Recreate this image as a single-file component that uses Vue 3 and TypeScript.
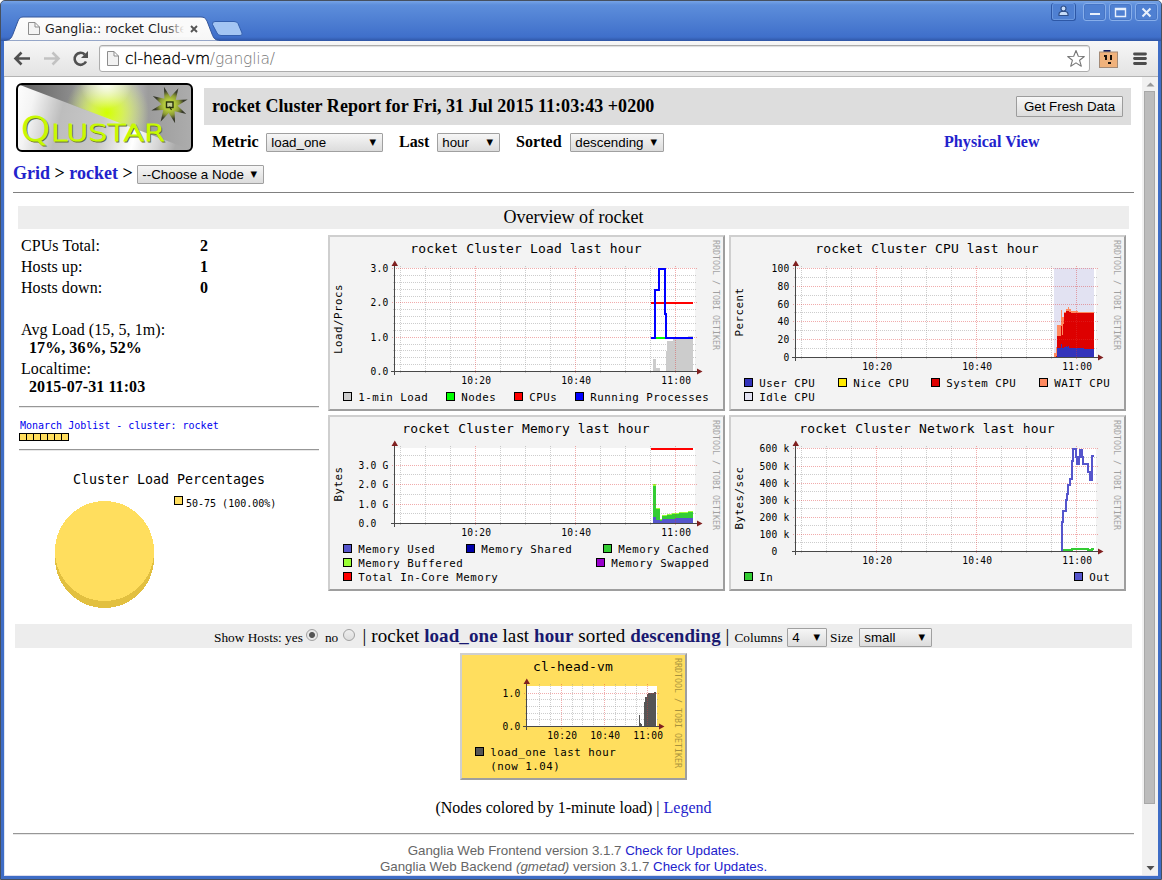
<script setup lang="ts">
interface Tick { y: number; label: string; x?: number }
interface Swatch { x: number; y: number; color: string; label: string; extra?: string }
interface Shape { d: string; color: string; line?: boolean }
interface Graph {
  id: string
  title: string
  unit?: string
  unitY?: number
  width: number
  height: number
  titleY: number
  plotRight: number
  base: number
  ticks: Tick[]
  minorY: number[]
  majorX: number[]
  minorX: number[]
  shapes: Shape[]
  legend: Swatch[]
}

type Step = [number, number]

// Builds a stepped area: every entry is [start x, top y], closed at `end`.
function steps(base: number, end: number, list: Step[]): string {
  let d = `M${list[0][0]} ${base}`
  for (const [x, y] of list) d += `H${x}V${y}`
  return `${d}H${end}V${base}Z`
}

const hourMajor = [147.5, 247.5, 347.5]
const hourMinor = [72.5, 97.5, 122.5, 172.5, 197.5, 222.5, 272.5, 297.5, 322.5]
const times = ['10:20', '10:40', '11:00']
const wide = { width: 397, height: 176, plotRight: 367, majorX: hourMajor, minorX: hourMinor }

const graphs: Graph[] = [
  {
    ...wide, id: 'load', title: 'rocket Cluster Load last hour', titleY: 17.5, unit: 'Load/Procs', unitY: 84, base: 136,
    ticks: [{ y: 33.5, label: '3.0' }, { y: 67.5, label: '2.0' }, { y: 102.5, label: '1.0' }, { y: 136.5, label: '0.0' }],
    minorY: [40.5, 47.5, 54.5, 61.5, 74.5, 81.5, 88.5, 95.5, 109.5, 115.5, 122.5, 129.5],
    shapes: [
      { color: '#cccccc', d: steps(136, 332, [[325, 124], [328, 133]]) },
      { color: '#cccccc', d: steps(136, 365, [[338, 116], [339, 106], [345, 103], [360, 101]]) },
      { color: '#00ff00', line: true, d: 'M323 103H365' },
      { color: '#ff0000', line: true, d: 'M323 68H365' },
      { color: '#0000ff', line: true, d: 'M323 103H327V55H331V34H337V79H338V103H365' },
    ],
    legend: [
      { x: 15, y: 157, color: '#cccccc', label: '1-min Load' },
      { x: 118, y: 157, color: '#00ff00', label: 'Nodes' },
      { x: 186, y: 157, color: '#ff0000', label: 'CPUs' },
      { x: 247, y: 157, color: '#0000ff', label: 'Running Processes' },
    ],
  },
  {
    ...wide, id: 'cpu', title: 'rocket Cluster CPU last hour', titleY: 17.5, unit: 'Percent', unitY: 77, base: 122,
    ticks: [{ y: 33.5, label: '100' }, { y: 51.5, label: '80' }, { y: 69.5, label: '60' }, { y: 86.5, label: '40' }, { y: 104.5, label: '20' }, { y: 122.5, label: '0' }],
    minorY: [42.5, 60.5, 77.5, 95.5, 113.5],
    shapes: [
      { color: '#e2e2f2', d: 'M325 33H365V122H325Z' },
      { color: '#ff8a60', d: steps(122, 365, [[325, 118], [327, 112], [328, 90], [332, 75], [333, 82], [335, 77], [337, 74], [339, 72], [340, 74], [342, 76], [349, 77]]) },
      { color: '#dd0000', d: steps(122, 365, [[327, 121], [328, 101], [332, 91], [333, 100], [334, 89], [335, 78], [337, 76], [340, 77], [342, 78]]) },
      { color: '#3333bb', d: steps(122, 365, [[328, 113], [332, 109], [333, 113], [335, 112], [337, 111], [338, 112], [339, 111], [340, 113], [355, 114]]) },
    ],
    legend: [
      { x: 15, y: 143, color: '#3333bb', label: 'User CPU' },
      { x: 109, y: 143, color: '#ffea00', label: 'Nice CPU' },
      { x: 202, y: 143, color: '#dd0000', label: 'System CPU' },
      { x: 310, y: 143, color: '#ff8a60', label: 'WAIT CPU' },
      { x: 15, y: 157, color: '#e2e2f2', label: 'Idle CPU' },
    ],
  },
  {
    ...wide, id: 'memory', title: 'rocket Cluster Memory last hour', titleY: 17.5, unit: 'Bytes', unitY: 69, base: 108,
    ticks: [{ y: 50.5, label: '3.0 G' }, { y: 69.5, label: '2.0 G' }, { y: 89.5, label: '1.0 G' }, { y: 108.5, label: '0.0', x: 48.5 }],
    minorY: [40.5, 59.5, 79.5, 98.5],
    shapes: [
      { color: '#99ff33', d: steps(108, 365, [[325, 69], [328, 93], [332, 104], [334, 100], [339, 99], [344, 98], [351, 97], [360, 96]]) },
      { color: '#33cc33', d: steps(108, 365, [[325, 71], [328, 94], [332, 105], [334, 101], [339, 100], [344, 99], [351, 98], [360, 97]]) },
      { color: '#5555cc', d: steps(108, 365, [[325, 102], [328, 105], [332, 106], [334, 104], [347, 103]]) },
      { color: '#ff0000', line: true, d: 'M323 34H365' },
    ],
    legend: [
      { x: 15, y: 129, color: '#5555cc', label: 'Memory Used' },
      { x: 138, y: 129, color: '#0000aa', label: 'Memory Shared' },
      { x: 275, y: 129, color: '#33cc33', label: 'Memory Cached' },
      { x: 15, y: 143, color: '#99ff33', label: 'Memory Buffered' },
      { x: 268, y: 143, color: '#9900cc', label: 'Memory Swapped' },
      { x: 15, y: 157, color: '#ff0000', label: 'Total In-Core Memory' },
    ],
  },
  {
    ...wide, id: 'network', title: 'rocket Cluster Network last hour', titleY: 17.5, unit: 'Bytes/sec', unitY: 83, base: 136,
    ticks: [
      { y: 33.5, label: '600 k' }, { y: 51.5, label: '500 k' }, { y: 68.5, label: '400 k' }, { y: 85.5, label: '300 k' },
      { y: 102.5, label: '200 k' }, { y: 119.5, label: '100 k' }, { y: 136.5, label: '0', x: 48.5 },
    ],
    minorY: [42.5, 59.5, 76.5, 93.5, 110.5, 127.5],
    shapes: [
      { color: '#33cc33', line: true, d: 'M333 135H343V134H359V135H363V134H365' },
      { color: '#5555cc', line: true, d: 'M333 136V107H334V96H337V85H338V79H339V70H341V64H343V46H344V34H347V42H348V49H350V42H351V35H353V42H354V49H359V57H361V65H363V41H365' },
    ],
    legend: [
      { x: 15, y: 157, color: '#33cc33', label: 'In' },
      { x: 345, y: 157, color: '#5555cc', label: 'Out' },
    ],
  },
]

const nodeGraph: Graph = {
  id: 'node', title: 'cl-head-vm', titleY: 18, width: 227, height: 127, plotRight: 197, base: 73,
  ticks: [{ y: 40.5, label: '1.0' }, { y: 73.5, label: '0.0' }],
  minorY: [46.5, 53.5, 60.5, 66.5],
  majorX: [101.5, 144.5, 187.5],
  minorX: [79.5, 90.5, 112.5, 122.5, 133.5, 155.5, 165.5, 176.5],
  shapes: [
    { color: '#555555', d: steps(73, 182, [[179, 62], [180, 70], [181, 71]]) },
    { color: '#555555', d: steps(73, 196, [[184, 49], [185, 44], [187, 41], [188, 40], [194, 39]]) },
  ],
  legend: [{ x: 15, y: 94, color: '#555555', label: 'load_one last hour', extra: '(now 1.04)' }],
}

const starPoints = Array.from({ length: 16 }, (_, i) => {
  const r = i % 2 === 0 ? 19 : 8
  const a = ((i * 22.5 - 107) * Math.PI) / 180
  return `${(153.5 + r * Math.cos(a)).toFixed(1)},${(22 + r * Math.sin(a)).toFixed(1)}`
}).join(' ')

const groups = [
  { cls: 'clusters', items: graphs },
  { cls: 'nodes', items: [nodeGraph] },
]
</script>

<template>
  <div class="window">
    <div class="titlebar">
      <svg class="tabs" width="250" height="27" viewBox="0 0 250 27">
        <defs>
          <linearGradient id="tabfill" x2="0" y2="1"><stop offset="0" stop-color="#fdfdfd" /><stop offset="1" stop-color="#f6f6f6" /></linearGradient>
          <linearGradient id="fade" x2="1" y2="0"><stop offset="0" stop-color="#fafafa" stop-opacity="0" /><stop offset="1" stop-color="#fafafa" /></linearGradient>
        </defs>
        <path d="M0 26.5C6 26 7 25 9 20L14 7C15.500 3.500 17 3 20 3H197C200 3 201.500 4 203 7L208 20C210 25 211 26 216 26.500V27H0Z" fill="url(#tabfill)" stroke="#34569a" stroke-width="1" />
        <path d="M208.500 10.500Q208 7.500 211 7.500H230Q233 7.500 234 9.500L238 19Q239 21.500 236 21.500H217Q214 21.500 213 19Z" fill="#a3c5f3" stroke="#335fae" />
        <path d="M24.500 8.500H31L35.500 13V20.500H24.500ZM31 8.500V13H35.500" fill="#f4f4f4" stroke="#8d8d8d" />
        <text x="41" y="19" class="tabtext">Ganglia:: rocket Cluste</text>
        <rect x="162" y="5" width="18" height="18" fill="url(#fade)" />
        <rect x="180" y="5" width="16" height="18" fill="#fafafa" />
        <path d="M187 12L193 18M193 12L187 18" stroke="#555" stroke-width="1.900" />
      </svg>
      <div class="winbuttons">
        <span class="wb user"><svg width="23" height="16" viewBox="0 0 23 16"><circle cx="11.500" cy="5.500" r="2.500" /><path d="M7 12.500V11Q7 9 9.500 8.500H13.500Q16 9 16 11V12.500Z" /></svg></span>
        <span class="wb"><svg width="21" height="16" viewBox="0 0 21 16"><path d="M6 10H16" class="bold" /></svg></span>
        <span class="wb"><svg width="21" height="16" viewBox="0 0 21 16"><path d="M5.500 4.500H15.500V12.500H5.500ZM5.500 5.500H15.500" /></svg></span>
        <span class="wb"><svg width="21" height="16" viewBox="0 0 21 16"><path d="M6.500 4.500L14.500 12.500M14.500 4.500L6.500 12.500" class="bold" /></svg></span>
      </div>
    </div>

    <div class="toolbar">
      <svg width="66" height="35" viewBox="0 0 66 35">
        <path d="M26 17.500H12.500M17.500 11.500L11.500 17.500L17.500 23.500" fill="none" stroke="#505050" stroke-width="2.600" />
        <path d="M40 17.500H53.500M48.500 11.500L54.500 17.500L48.500 23.500" fill="none" stroke="#c2c2c2" stroke-width="2.600" />
      </svg>
      <svg class="reload" width="19" height="35" viewBox="0 0 19 35">
        <path d="M16 20.500A6 6 0 1 1 14.800 13.500" fill="none" stroke="#505050" stroke-width="2.600" />
        <path d="M18 10V17H11Z" fill="#505050" />
      </svg>
      <div class="urlbar">
        <svg width="18" height="20" viewBox="0 0 18 20"><path d="M3.500 2.500H10L14.500 7V16.500H3.500ZM10 2.500V7H14.500" fill="#f2f2f2" stroke="#8d8d8d" /></svg>
        <svg class="url" width="160" height="24" viewBox="0 0 160 24"><text x="0" y="17" textLength="150" lengthAdjust="spacing"><tspan class="host">cl-head-vm</tspan><tspan fill="#777">/ganglia/</tspan></text></svg>
        <svg class="bookmark" width="20" height="20" viewBox="0 0 20 20"><path d="M10 1.500L12.300 7.200L18.300 7.500L13.600 11.300L15.300 17.200L10 13.900L4.700 17.200L6.400 11.300L1.700 7.500L7.700 7.200Z" fill="#fff" stroke="#777" stroke-width="1.100" stroke-linejoin="round" /></svg>
      </div>
      <svg class="ext" width="20" height="20" viewBox="0 0 20 20">
        <rect x="4.500" y="1" width="7" height="3" fill="#111c5c" /><rect x="0.500" y="3" width="18" height="15.500" fill="#f0b27c" stroke="#a38a76" />
        <path d="M5 6H8V11H6V8H5ZM11 6H13V11H11ZM9 13H12V15H9Z" fill="#1a120c" />
      </svg>
      <svg class="menu" width="14" height="14" viewBox="0 0 14 14"><path d="M1.500 2H12.500M1.500 6.500H12.500M1.500 11.500H12.500" stroke="#4c4c4c" stroke-width="2.800" stroke-linecap="round" /></svg>
    </div>

    <div class="viewport">
      <main class="page">
        <header class="header">
          <svg class="logo" width="177" height="69" viewBox="0 0 177 69">
            <defs>
              <linearGradient id="silver" gradientUnits="userSpaceOnUse" x1="0" y1="0" x2="165" y2="40">
                <stop offset="0" stop-color="#fff" /><stop offset="0.120" stop-color="#f4f4f4" /><stop offset="0.300" stop-color="#bdbdbd" />
                <stop offset="0.550" stop-color="#c8c8c8" /><stop offset="0.750" stop-color="#fff" /><stop offset="0.900" stop-color="#d4d4d4" /><stop offset="1" stop-color="#aaa" />
              </linearGradient>
              <linearGradient id="steel" x1="0" y1="0" x2="1" y2="0">
                <stop offset="0.050" stop-color="#666" /><stop offset="0.300" stop-color="#8c8c8c" /><stop offset="0.520" stop-color="#e4e4e4" />
                <stop offset="0.750" stop-color="#9c9c9c" /><stop offset="1" stop-color="#acacac" />
              </linearGradient>
              <radialGradient id="glow" gradientUnits="userSpaceOnUse" cx="91" cy="30" r="42">
                <stop offset="0" stop-color="#d2ff00" /><stop offset="0.350" stop-color="#d8f83c" stop-opacity="0.850" /><stop offset="1" stop-color="#d8f080" stop-opacity="0" />
              </radialGradient>
              <radialGradient id="starfill"><stop offset="0.300" stop-color="#b4cb3c" /><stop offset="0.550" stop-color="#8d9c35" /><stop offset="0.800" stop-color="#383a2c" /></radialGradient>
              <radialGradient id="shine" gradientUnits="userSpaceOnUse" cx="90" cy="0" r="26"><stop offset="0" stop-color="#fff" stop-opacity="0.900" /><stop offset="1" stop-color="#fff" stop-opacity="0" /></radialGradient>
            </defs>
            <rect x="1" y="1" width="175" height="67" rx="5" fill="url(#silver)" />
            <path d="M4 2H172Q175 2 175 5V67L4 2Z" fill="url(#steel)" />
            <path d="M4 2H175V67Z" fill="url(#glow)" />
            <path d="M4 2H175V67Z" fill="url(#shine)" />
            <polygon :points="starPoints" fill="url(#starfill)" />
            <rect x="150.500" y="19" width="6.500" height="5.500" fill="#c4cf8c" stroke="#26300c" stroke-width="1.400" /><path d="M153.500 23.500L155.500 27" stroke="#26300c" stroke-width="1.200" />
            <g class="wordshadow" transform="translate(1 1)"><text x="4.500" y="57.500" class="big" textLength="30" lengthAdjust="spacingAndGlyphs">Q</text><text x="35" y="57.500" class="rest" textLength="114" lengthAdjust="spacingAndGlyphs">LUSTAR</text></g>
            <g class="word"><text x="4.500" y="57.500" class="big" textLength="30" lengthAdjust="spacingAndGlyphs">Q</text><text x="35" y="57.500" class="rest" textLength="114" lengthAdjust="spacingAndGlyphs">LUSTAR</text></g>
            <rect x="1" y="1" width="175" height="67" rx="5" fill="none" stroke="#000" stroke-width="2" />
          </svg>
          <div class="report">
            <div class="reportbar">
              <h1>rocket Cluster Report for Fri, 31 Jul 2015 11:03:43 +0200</h1>
              <button type="button" class="fresh">Get Fresh Data</button>
            </div>
            <div class="controls">
              <b class="metric">Metric</b><span class="select s1">load_one<i>▼</i></span>
              <b class="last">Last</b><span class="select s2">hour<i>▼</i></span>
              <b class="sorted">Sorted</b><span class="select s3">descending<i>▼</i></span>
              <a class="physical">Physical View</a>
            </div>
          </div>
        </header>
        <nav class="crumbs"><b><a>Grid</a> &gt; <a>rocket</a> &gt;</b><span class="select s4">--Choose a Node<i>▼</i></span></nav>
        <div class="rule"></div>
        <h2 class="overview">Overview of rocket</h2>

        <section class="dashboard">
          <aside class="stats">
            <dl>
              <div><dt>CPUs Total:</dt><dd>2</dd></div>
              <div><dt>Hosts up:</dt><dd>1</dd></div>
              <div><dt>Hosts down:</dt><dd>0</dd></div>
            </dl>
            <p class="avg">Avg Load (15, 5, 1m):<b>17%, 36%, 52%</b></p>
            <p>Localtime:<b>2015-07-31 11:03</b></p>
            <div class="groove"></div>
            <div class="joblist">Monarch Joblist - cluster: rocket</div>
            <div class="jobs"><span v-for="n in 7" :key="n"></span></div>
            <div class="groove second"></div>
            <svg class="pie" width="300" height="150" viewBox="0 0 300 150">
              <text x="54" y="24" class="pietitle">Cluster Load Percentages</text>
              <path d="M36 91V98A49.500 50 0 0 0 135 98V91Z" fill="#e2c040" shape-rendering="crispEdges" />
              <ellipse cx="85.500" cy="91" rx="49.500" ry="50" fill="#ffde5e" shape-rendering="crispEdges" />
              <rect x="155.500" y="36.500" width="8" height="8" fill="#ffde5e" stroke="#000" />
              <text x="167" y="47" class="pielegend">50-75 (100.00%)</text>
            </svg>
          </aside>
          <div class="clusters">
            <div v-for="g in groups[0].items.slice(0, 0)" :key="g.id"></div>
          </div>
        </section>

        <template v-for="group in groups" :key="group.cls">
          <div v-if="group.cls === 'nodes'" class="hostbar">
            <span class="small">Show Hosts: yes</span><span class="radio on"></span><span class="small no">no</span><span class="radio off"></span>
            <span class="summary">| rocket <b>load_one</b> last <b>hour</b> sorted <b>descending</b> |</span>
            <span class="small cols">Columns</span><span class="select s5">4<i>▼</i></span>
            <span class="small size">Size</span><span class="select s6">small<i>▼</i></span>
          </div>
          <div :class="group.cls">
            <div v-for="g in group.items" :key="g.id" class="graph" :class="g.id">
              <svg :width="g.width" :height="g.height" :viewBox="`0 0 ${g.width} ${g.height}`">
                <rect x="67" y="33" :width="g.plotRight - 67" :height="g.base - 33" fill="#fff" />
                <g class="minor">
                  <path v-for="y in g.minorY" :key="y" :d="`M65 ${y}H${g.plotRight + 2}`" />
                  <path v-for="x in g.minorX" :key="x" :d="`M${x} 31V${g.base + 2}`" />
                </g>
                <path v-for="(s, i) in g.shapes.filter((q) => !q.line)" :key="'s' + i" :d="s.d" :fill="s.color" shape-rendering="crispEdges" />
                <g class="major">
                  <path v-for="t in g.ticks" :key="t.y" :d="`M64 ${t.y}H${g.plotRight + 2}`" />
                  <path v-for="x in g.majorX" :key="x" :d="`M${x} 31V${g.base + 3}`" />
                </g>
                <path v-for="(s, i) in g.shapes.filter((q) => q.line)" :key="'n' + i" :d="s.d" fill="none" :stroke="s.color" stroke-width="2" shape-rendering="crispEdges" />
                <path class="axis" :d="`M66.500 29V${g.base + 4}M63 ${g.base + 0.5}H${g.plotRight + 4}`" />
                <path class="arrow" :d="`M63.500 31H70L66.800 25.500ZM${g.plotRight + 2} ${g.base - 2.500}V${g.base + 3.500}L${g.plotRight + 7.500} ${g.base + 0.5}Z`" />
                <text v-for="t in g.ticks" :key="'l' + t.y" class="tick" text-anchor="end" :x="t.x ?? 60.500" :y="t.y + 3.500">{{ t.label }}</text>
                <text v-for="(x, i) in g.majorX" :key="'t' + x" class="tick" text-anchor="middle" :x="x + 0.800" :y="g.base + 12.500">{{ times[i] }}</text>
                <text class="gtitle" text-anchor="middle" :x="g.width / 2 - 0.500" :y="g.titleY">{{ g.title }}</text>
                <text v-if="g.unit" class="gtext" text-anchor="middle" :transform="`translate(14 ${g.unitY}) rotate(-90)`">{{ g.unit }}</text>
                <text class="mark" :transform="`translate(${g.width - 12.500} 5) rotate(90)`">RRDTOOL / TOBI OETIKER</text>
                <g v-for="l in g.legend" :key="l.label">
                  <rect :x="l.x + 0.5" :y="l.y + 0.5" width="8" height="8" :fill="l.color" stroke="#000" />
                  <text class="gtext" :x="l.x + 15.200" :y="l.y + 9">{{ l.label }}</text>
                  <text v-if="l.extra" class="gtext" :x="l.x + 15.200" :y="l.y + 23">{{ l.extra }}</text>
                </g>
              </svg>
            </div>
          </div>
        </template>

        <p class="colored">(Nodes colored by 1-minute load) | <a>Legend</a></p>
        <div class="groove wide"></div>
        <footer class="footer">
          <div>Ganglia Web Frontend version 3.1.7 <a>Check for Updates.</a></div>
          <div>Ganglia Web Backend <em>(gmetad)</em> version 3.1.7 <a>Check for Updates.</a></div>
        </footer>
      </main>
      <div class="scroll">
        <svg width="15" height="14" viewBox="0 0 15 14"><path d="M3.500 9.500L7.500 5.500L11.500 9.500Z" fill="#999" /></svg>
        <div class="thumb"></div>
        <svg class="down" width="15" height="14" viewBox="0 0 15 14"><path d="M3.500 5L7.500 9.500L11.500 5Z" fill="#505050" /></svg>
      </div>
    </div>
  </div>
</template>

<style>
body { margin: 0; background: #fff; }
</style>

<style scoped>
* { box-sizing: border-box; }
svg { display: block; flex: none; }
.window { width: 1162px; height: 880px; overflow: hidden; border: 1px solid #46505f; border-radius: 5px 5px 0 0; background: #3e6dc6; display: flex; flex-direction: column; }
.titlebar { height: 40px; flex: none; background: linear-gradient(#76a3e6 0, #5d8edb 4px, #3f6fca 36px, #2f55a5 40px); display: flex; justify-content: space-between; padding: 13px 3px 0; }
.tabtext { font: 12.5px "DejaVu Sans", sans-serif; fill: #222; }
.winbuttons { display: flex; gap: 3px; margin-top: -11px; height: 17px; }
.wb { width: 23px; height: 18px; border: 1px solid #87aeea; border-radius: 3px; box-shadow: inset 0 0 0 1px #4776c7; display: flex; justify-content: center; background: #4f80d2; }
.wb.user { width: 25px; border-color: #2d57a6; box-shadow: inset 0 0 0 1px #6a98df; margin-right: 4px; border-top: 0; }
.wb path { fill: none; stroke: #e8f0fc; stroke-width: 1.4; }
.wb .bold { stroke-width: 2; }
.wb.user path, .wb.user circle { fill: #c7dcf8; stroke: #2f4f89; stroke-width: 1.2; }
.toolbar { height: 36px; flex: none; margin: 0 3px; background: linear-gradient(#f7f7f7, #e3e3e3); border-bottom: 1px solid #b4b4b4; display: flex; align-items: center; }
.urlbar { margin-left: 10px; width: 991px; height: 27px; border: 1px solid #acacac; border-radius: 3px; background: #fff; display: flex; align-items: center; padding: 0 3px 0 4px; box-shadow: inset 0 1px 1px #ddd; }
.url { margin-left: 3px; font: 200 15.5px "DejaVu Sans", sans-serif; }
.host { fill: #000; stroke: #000; stroke-width: 0.35px; }
.bookmark { margin-left: auto; }
.ext { margin-left: 9px; }
.menu { margin-left: 14px; }
.viewport { height: 799px; flex: none; margin: 0 3px; border-left: 1px solid #dce5f3; display: flex; background: #fff; border-bottom: 1px solid #dde; }
.page { width: 1137px; height: 798px; overflow: hidden; flex: none; font: 16px "Liberation Serif", serif; color: #000; }
.scroll { width: 16px; background: #f1f1f1; display: flex; flex-direction: column; align-items: center; }
.thumb { width: 11px; height: 713px; background: #bcbcbc; border: 1px solid #a8a8a8; margin-right: 1px; }
.down { margin-top: auto; }
a { color: #2222cc; }
h1, h2, p, dl, dd { margin: 0; }
.header { display: flex; gap: 11px; padding: 6px 0 0 11px; }
.word, .wordshadow { font-family: "DejaVu Sans", sans-serif; font-weight: 200; fill: #c8fa00; stroke: #c8fa00; stroke-width: 1.2; }
.wordshadow { fill: #66703a; stroke: #66703a; }
.big { font-size: 33.5px; }
.rest { font-size: 23.5px; }
.report { width: 927px; padding-top: 5px; }
.reportbar { height: 37px; background: #ddd; display: flex; align-items: center; justify-content: space-between; padding: 0 8px; }
h1 { font-size: 18px; line-height: 36px; height: 37px; letter-spacing: 0.036px; }
.fresh { width: 107px; height: 21px; padding: 0; font: 13.33px/19px "Liberation Sans", sans-serif; border: 1px solid #9c9c9c; border-radius: 1px; background: linear-gradient(#f8f8f8, #dcdcdc); color: #000; }
.controls { display: flex; margin-top: 8px; height: 19px; line-height: 18px; padding-left: 8px; letter-spacing: 0.07px; }
.metric { width: 54px; }
.last { width: 38px; margin-left: 16px; }
.sorted { width: 54px; margin-left: 16px; }
.physical { font-weight: bold; margin-left: 280px; }
.select { flex: none; height: 19px; border: 1px solid #a0a0a0; border-radius: 1px; background: linear-gradient(#f6f6f6, #dcdcdc); font: 13.33px/18px "Liberation Sans", sans-serif; letter-spacing: 0; color: #000; padding: 0 6px 0 4.3px; display: flex; justify-content: space-between; }
.select i { font: 8.5px/16px "DejaVu Sans", sans-serif; }
.s1 { width: 117px; } .s2 { width: 63px; } .s3 { width: 94px; } .s4 { width: 127px; } .s5 { width: 40px; } .s6 { width: 73px; }
.crumbs { display: flex; margin: 13px 0 0 8px; height: 19px; font-size: 18px; line-height: 16px; }
.crumbs b { width: 124px; white-space: nowrap; }
.rule { height: 1px; margin: 8px 8px 0; background: #808080; }
.overview { margin: 13px 13px 0; height: 23px; background: #ededed; text-align: center; font-weight: normal; font-size: 18px; line-height: 22px; }
.dashboard { height: 395px; margin-bottom: -389px; padding-left: 14px; }
.stats { width: 300px; padding-top: 6px; letter-spacing: 0.07px; }
dl > div { display: flex; height: 21px; line-height: 21px; padding-left: 2px; }
dt { width: 179px; }
dd { font-weight: bold; }
.stats p { padding-left: 2px; line-height: 18px; margin-bottom: 3px; }
.stats p b { display: block; padding-left: 8px; }
.stats .avg { margin-top: 23px; }
.groove { height: 2px; margin-top: 10px; border-top: 1px solid #979797; border-bottom: 1px solid #e8e8e8; }
.joblist { font: 10px/14px "DejaVu Sans Mono", monospace; letter-spacing: 0; color: #0000ee; margin: 11px 0 0 1px; white-space: nowrap; }
.jobs { display: flex; height: 8px; width: 50px; border: 1px solid #000; background: #000; gap: 1px; }
.jobs span { flex: 1; background: #ffde5e; }
.groove.second { margin-top: 8px; }
.pie { margin-top: 9px; letter-spacing: 0; }
.pietitle { font: 13.3px "DejaVu Sans Mono", monospace; }
.pielegend { font: 10px "DejaVu Sans Mono", monospace; }
.clusters { display: grid; grid-template-columns: 397px 397px; gap: 4px; margin-left: 323px; height: 389px; align-content: start; }
.dashboard .clusters { display: none; }
.graph { position: relative; background: #f3f3f3; }
.graph::after { content: ""; position: absolute; inset: 0; border: 2px solid; border-color: #cfcfcf #9e9e9e #9e9e9e #cfcfcf; }
.nodes { margin: 5px 0 0 455px; width: 227px; }
.graph.node { background: #ffde5e; }
.minor path, .major path { fill: none; stroke: #969696; stroke-opacity: 0.48; stroke-dasharray: 1 1; }
.major path { stroke: #dd3a3a; stroke-opacity: 0.42; }
.axis { fill: none; stroke: #484848; }
.arrow { fill: #802020; }
.tick { font: 9.6px "DejaVu Sans Mono", monospace; letter-spacing: 0.22px; }
.gtitle { font: 13px "DejaVu Sans Mono", monospace; letter-spacing: 0.15px; }
.gtext { font: 10.8px "DejaVu Sans Mono", monospace; letter-spacing: 0.5px; }
.mark { font: 8.3px "DejaVu Sans Mono", monospace; fill: #000; opacity: 0.34; }
.hostbar { margin: 0 10px; height: 24px; background: #ededed; display: flex; padding-left: 199px; white-space: nowrap; }
.small { font-size: 13.33px; line-height: 27px; }
.radio { width: 12px; height: 12px; border: 1px solid #a0a0a0; border-radius: 50%; margin: 5px 0 0 3px; background: linear-gradient(#eee, #ddd); }
.radio.on { background: radial-gradient(circle, #555 0 2.5px, #e8e8e8 3.5px); }
.radio.off { margin-left: 5px; }
.no { margin-left: 7px; }
.summary { font-size: 19px; line-height: 23px; margin-left: 7.4px; letter-spacing: 0.085px; }
.summary b { color: #191970; }
.cols { margin-left: 5px; width: 52.6px; }
.hostbar .select { margin-top: 4px; }
.size { margin-left: 3px; width: 29px; }
.colored { text-align: center; width: 1137px; line-height: 18px; margin-top: 19px; }
.groove.wide { margin: 16px 8px 0; }
.footer { margin-top: 8px; text-align: center; font: 13.33px/16px "Liberation Sans", sans-serif; color: #666; }
</style>
